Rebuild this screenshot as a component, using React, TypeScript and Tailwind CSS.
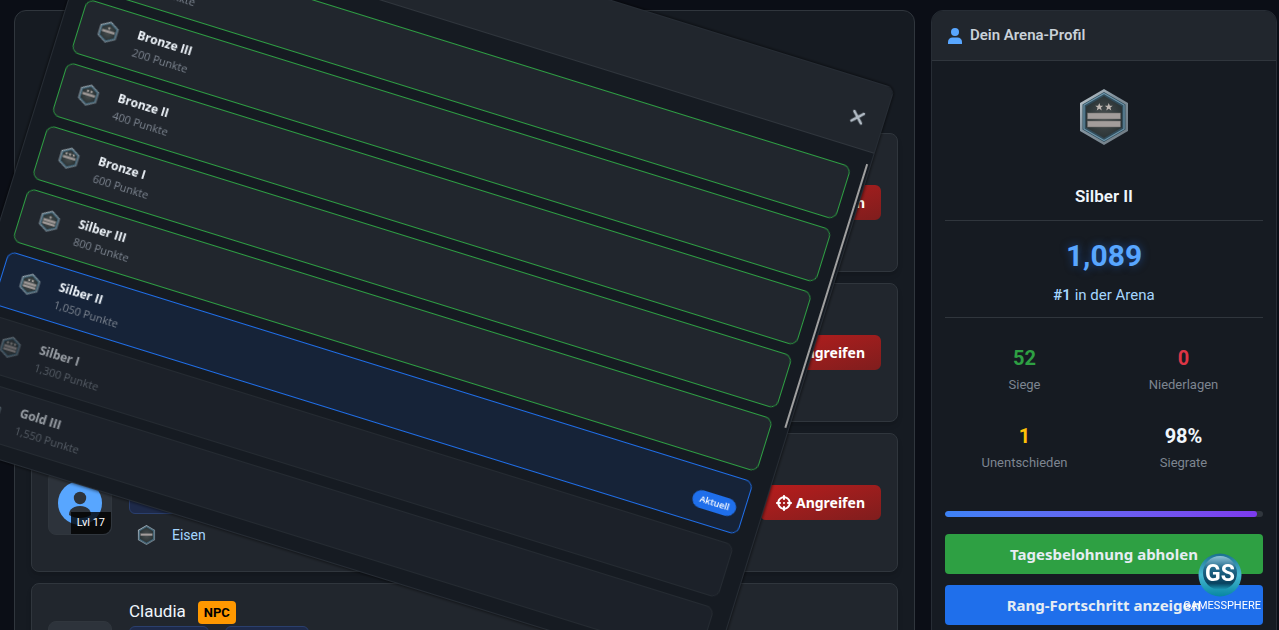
import { useState } from 'react';
import { X } from 'lucide-react';
import { FaCrosshairs } from 'react-icons/fa6';
import { clsx } from 'clsx';

interface Rank {
  name: string;
  points: string;
  stars: number;
  bars: number;
  state: 'done' | 'current' | 'locked';
}

const ranks: Rank[] = [
  { name: 'Eisen', points: '0', stars: 0, bars: 1, state: 'done' },
  { name: 'Bronze III', points: '200', stars: 1, bars: 1, state: 'done' },
  { name: 'Bronze II', points: '400', stars: 2, bars: 1, state: 'done' },
  { name: 'Bronze I', points: '600', stars: 3, bars: 1, state: 'done' },
  { name: 'Silber III', points: '800', stars: 1, bars: 2, state: 'done' },
  { name: 'Silber II', points: '1,050', stars: 2, bars: 2, state: 'current' },
  { name: 'Silber I', points: '1,300', stars: 3, bars: 2, state: 'locked' },
  { name: 'Gold III', points: '1,550', stars: 1, bars: 3, state: 'locked' },
];

const opponents = ['', '', '', 'Claudia'];

const stats = [
  { value: '52', label: 'Siege', color: 'text-[#2ea043]' },
  { value: '0', label: 'Niederlagen', color: 'text-[#dc3545]' },
  { value: '1', label: 'Unentschieden', color: 'text-[#ffc107]' },
  { value: '98%', label: 'Siegrate', color: 'text-[#f0f6fc]' },
];

const RankIcon = ({ stars, bars, className }: { stars: number; bars: number; className?: string }) => {
  const top = stars > 0 ? 24 : 28 - bars * 4;
  return (
    <svg viewBox="0 0 50 56" className={className} aria-hidden="true">
      <defs>
        <linearGradient id="rim" x1="0" y1="0" x2="1" y2="1">
          <stop offset="0" stopColor="#c3ccd1" />
          <stop offset="0.4" stopColor="#84949f" />
          <stop offset="1" stopColor="#6d7880" />
        </linearGradient>
        <radialGradient id="plate">
          <stop offset="0" stopColor="#4a4f50" />
          <stop offset="1" stopColor="#2c3537" />
        </radialGradient>
      </defs>
      <path d="M25 0 49 14V42L25 56 1 42V14Z" fill="url(#rim)" />
      <path d="M25 3 46.500 15.500V40.500L25 53 3.500 40.500V15.500Z" fill="#314c5b" />
      <path d="M25 4.500 45 16V40L25 51.500 5 40V16Z" fill="none" stroke="#6b94a9" strokeWidth="1.200" />
      <path d="M25 7 43 17.500V38.500L25 49 7 38.500V17.500Z" fill="url(#plate)" />
      {Array.from({ length: stars }).map((_, i) => (
        <path
          key={i}
          transform={`translate(${25 + (i - (stars - 1) / 2) * 9.5} 18)`}
          d="M0-4 1.100-1.200 4-1.200 1.700.600 2.500 3.400 0 1.700-2.500 3.400-1.700.600-4-1.200-1.100-1.200Z"
          fill="#bdb6b1"
        />
      ))}
      {Array.from({ length: bars }).map((_, i) => (
        <rect key={i} x="8.500" y={top + i * 8} width="33" height="6" fill="#a39d9b" stroke="#6d6b6a" strokeWidth="0.500" />
      ))}
    </svg>
  );
};

const PersonIcon = ({ className }: { className?: string }) => (
  <svg viewBox="0 0 44 44" className={className} aria-hidden="true">
    <circle cx="22" cy="22" r="22" fill="#58a6ff" />
    <circle cx="22" cy="17" r="6.200" fill="#2d333b" />
    <path d="M11 34c0-6 5-9 11-9s11 3 11 9c-3 2-7 3-11 3s-8-1-11-3Z" fill="#2d333b" />
  </svg>
);

const OpponentCard = ({ name }: { name: string }) => (
  <div className="flex h-[139px] items-center gap-[17px] rounded-lg border border-[#30363d] bg-[#21262d] px-4 shadow-md">
    <div className="relative flex size-16 shrink-0 items-center justify-center rounded-lg border border-[#30363d] bg-[#2d333b]">
      <PersonIcon className="size-11" />
      <span className="absolute right-0 bottom-0 rounded-br-lg bg-black/80 px-[6px] text-[11px] leading-[22px] text-white">
        Lvl 17
      </span>
    </div>
    <div className="flex flex-1 flex-col gap-[2px] self-start pt-4">
      <div className="flex h-6 items-center gap-3">
        <span className="text-[17px] text-[#f0f6fc]">{name}</span>
        <span className="rounded-sm bg-[#ff9800] px-[6px] text-[13px] leading-[23px] font-bold text-black">NPC</span>
      </div>
      <div className="flex gap-4">
        <span className="h-[38px] w-20 rounded-md border border-[#2a3f6e] bg-[#1e2a4a]" />
        <span className="h-[38px] w-[84px] rounded-md border border-[#2a3f6e] bg-[#1e2a4a]" />
      </div>
      <div className="mt-[3px] flex h-8 items-center gap-4 pl-2">
        <RankIcon stars={0} bars={1} className="h-5 w-[19px]" />
        <span className="text-sm text-[#a5d6ff]">Eisen</span>
      </div>
    </div>
    <button className="flex h-[35px] shrink-0 items-center gap-1 rounded-md bg-linear-to-br from-[#b91c1c] to-[#7f1d1d] px-4 font-['Noto_Sans',sans-serif] text-sm font-bold text-white">
      <FaCrosshairs className="size-4" />
      Angreifen
    </button>
  </div>
);

const ProfilePanel = () => (
  <aside className="min-h-screen w-[346px] shrink-0 overflow-hidden rounded-t-xl border border-[#272d35] bg-[#161b22]">
    <h2 className="flex h-[50px] items-center gap-2 border-b border-[#30363d] bg-[#21262d] px-4 text-[15px] font-semibold text-[#c9d1d9]">
      <svg viewBox="0 0 14 16" className="h-4 w-[14px]" aria-hidden="true">
        <circle cx="7" cy="4" r="4" fill="#58a6ff" />
        <path d="M0 16v-2c0-3 2-4.500 4.500-4.500h5c2.500 0 4.500 1.500 4.500 4.500v2Z" fill="#58a6ff" />
      </svg>
      Dein Arena-Profil
    </h2>
    <div className="px-[13px]">
      <div className="flex flex-col items-center border-b border-[#30363d] pt-7 pb-3">
        <RankIcon stars={2} bars={2} className="h-14 w-[50px]" />
        <p className="mt-[39px] text-[17px] leading-6 font-semibold text-[#f0f6fc]">Silber II</p>
      </div>
      <div className="flex h-[97px] flex-col items-center border-b border-[#30363d] pt-[15px]">
        <p className="text-3xl leading-10 font-bold text-[#58a6ff] [text-shadow:0_0_8px_#1f6feb80]">1,089</p>
        <p className="mt-[3px] text-[15px] leading-8 text-[#a5d6ff]">
          <strong className="font-semibold">#1</strong> in der Arena
        </p>
      </div>
      <dl className="grid grid-cols-2 gap-y-6 pt-[25px] text-center">
        {stats.map((stat) => (
          <div key={stat.label} className="flex flex-col-reverse">
            <dt className="text-[13px] leading-6 text-[#7d8590]">{stat.label}</dt>
            <dd className={clsx('text-xl leading-[30px] font-bold', stat.color)}>{stat.value}</dd>
          </div>
        ))}
      </dl>
      <div className="mt-9 h-[6px] overflow-hidden rounded-full bg-[#30363d]">
        <div className="h-full w-[98%] rounded-full bg-linear-to-r from-[#3b82f6] to-[#7c3aed]" />
      </div>
      <div className="mt-[17px] flex flex-col gap-[11px] font-['Noto_Sans',sans-serif] text-[15px] font-bold text-[#e6edf3]">
        <button className="h-10 rounded-sm bg-[#2ea043]">Tagesbelohnung abholen</button>
        <button className="h-10 rounded-sm bg-[#1f6feb]">Rang-Fortschritt anzeigen</button>
      </div>
    </div>
  </aside>
);

const RankRow = ({ rank }: { rank: Rank }) => (
  <li
    className={clsx(
      'flex h-14 items-center gap-[13px] rounded-lg border pr-2 pl-[13px]',
      rank.state === 'done' && 'border-[#2ea043] bg-[#21262d]',
      rank.state === 'current' && 'border-[#1f6feb] bg-[#162338]',
      rank.state === 'locked' && 'border-[#30363d] bg-[#21262d] opacity-60'
    )}
  >
    <span className="flex w-8 justify-center pb-1">
      <RankIcon stars={rank.stars} bars={rank.bars} className="h-[22px] w-5" />
    </span>
    <div className="flex-1">
      <p className="text-xs leading-5 font-bold text-[#f0f6fc]">{rank.name}</p>
      <p className="text-[11px] leading-4 text-[#7d8590]">{rank.points} Punkte</p>
    </div>
    {rank.state === 'current' && (
      <span className="mt-2 rounded-full bg-[#1f6feb] px-[7px] text-[9px] leading-[18px] font-semibold text-white">
        Aktuell
      </span>
    )}
  </li>
);

const RankModal = ({ onClose }: { onClose: () => void }) => (
  <div
    role="dialog"
    className="fixed top-[88px] left-[79px] w-[816px] origin-top-right rotate-[17.25deg] overflow-hidden rounded-lg border border-[#262c34] bg-[#161b22] font-['Open_Sans',sans-serif] shadow-[0_0_3px_1px_#00000080]"
  >
    <div className="flex h-[68px] items-center justify-end border-b border-[#30363d] bg-[#21262d] px-4">
      <button onClick={onClose} aria-label="Schließen" className="pt-2">
        <X className="size-5 text-[#b1bac4]" strokeWidth={3} />
      </button>
    </div>
    <div className="relative px-[17px] pt-[19px] pb-[14px]">
      <ul className="flex flex-col gap-[10px]">
        {ranks.map((rank) => (
          <RankRow key={rank.name} rank={rank} />
        ))}
      </ul>
      {/* scroll thumb */}
      <div className="absolute top-3 right-[2px] h-[276px] w-[2px] bg-[#a0a0a0]" />
    </div>
  </div>
);

const Watermark = () => (
  <div className="pointer-events-none fixed right-[18px] bottom-[15px] flex flex-col items-end">
    <svg viewBox="0 0 44 44" className="mr-[19px] size-11" aria-hidden="true">
      <defs>
        <linearGradient id="ring" x1="0" y1="0" x2="0" y2="1">
          <stop offset="0" stopColor="#1b6f8f" />
          <stop offset="0.5" stopColor="#48b9d2" />
          <stop offset="1" stopColor="#0787a2" />
        </linearGradient>
        <linearGradient id="orb" x1="0" y1="0" x2="0" y2="1">
          <stop offset="0" stopColor="#8fc3d8" />
          <stop offset="0.35" stopColor="#236b8d" />
          <stop offset="0.8" stopColor="#09425f" />
          <stop offset="1" stopColor="#1c9dba" />
        </linearGradient>
      </defs>
      <circle cx="22" cy="22" r="21.500" fill="url(#ring)" />
      <circle cx="22" cy="20" r="17" fill="url(#orb)" />
      <text x="22" y="28" textAnchor="middle" fontSize="23" className="fill-white font-[Roboto,sans-serif] font-bold">
        GS
      </text>
    </svg>
    <span className="text-[11px] leading-[18px] text-white">GAMESSPHERE</span>
  </div>
);

export default function App() {
  const [isOpen, setIsOpen] = useState(true);

  return (
    <div className="h-screen overflow-hidden bg-[#0b0e16] font-[Roboto,sans-serif]">
      <div className="flex gap-4 pt-[10px] pr-[2px] pl-[14px]">
        <main className="flex-1 rounded-t-xl border border-[#30363d] bg-[#161b22] px-4 pt-[122px]">
          <div className="flex flex-col gap-[11px]">
            {opponents.map((name, index) => (
              <OpponentCard key={index} name={name} />
            ))}
          </div>
        </main>
        <ProfilePanel />
      </div>
      {isOpen && <RankModal onClose={() => setIsOpen(false)} />}
      <Watermark />
    </div>
  );
}
